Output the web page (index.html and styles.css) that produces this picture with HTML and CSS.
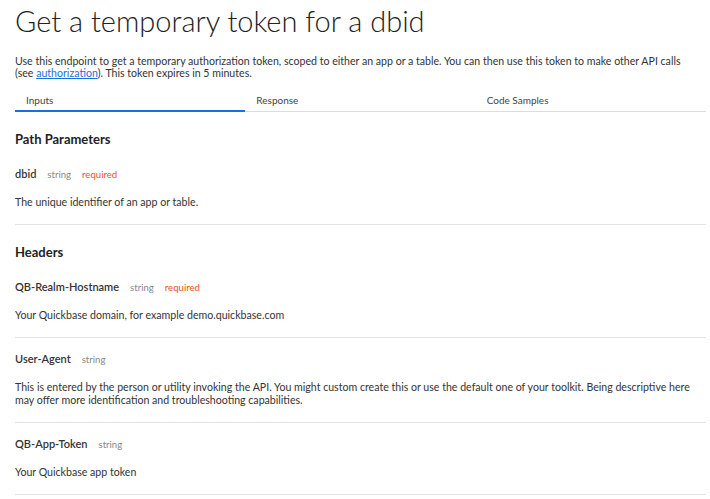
FILE: index.html
```html
<!DOCTYPE html>
<html lang="en">
<head>
  <meta charset="UTF-8">
  <title>Get a temporary token for a dbid</title>
  <link rel="stylesheet" href="styles.css">
</head>
<body>
  <div class="page">
    <h1>Get a temporary token for a dbid</h1>

    <p class="intro">
      Use this endpoint to get a temporary authorization token, scoped to either an app or a table. You can then use this token to make other API calls<br>
      (see <a href="#">authorization</a>). This token expires in 5 minutes.
    </p>

    <!-- Tabs -->
    <div class="tabs">
      <div class="tab active">Inputs</div>
      <div class="tab">Response</div>
      <div class="tab">Code Samples</div>
    </div>

    <!-- Path parameters -->
    <div class="section">
      <h2>Path Parameters</h2>
      <div class="param">
        <div class="param-head">
          <span class="param-name">dbid</span>
          <span class="param-type">string</span>
          <span class="param-req">required</span>
        </div>
        <p class="param-desc">The unique identifier of an app or table.</p>
      </div>
    </div>

    <!-- Headers -->
    <div class="section">
      <h2>Headers</h2>
      <div class="param">
        <div class="param-head">
          <span class="param-name">QB-Realm-Hostname</span>
          <span class="param-type">string</span>
          <span class="param-req">required</span>
        </div>
        <p class="param-desc">Your Quickbase domain, for example demo.quickbase.com</p>
      </div>
      <div class="param">
        <div class="param-head">
          <span class="param-name">User-Agent</span>
          <span class="param-type">string</span>
        </div>
        <p class="param-desc">This is entered by the person or utility invoking the API. You might custom create this or use the default one of your toolkit. Being descriptive here may offer more identification and troubleshooting capabilities.</p>
      </div>
      <div class="param">
        <div class="param-head">
          <span class="param-name">QB-App-Token</span>
          <span class="param-type">string</span>
        </div>
        <p class="param-desc">Your Quickbase app token</p>
      </div>
    </div>
  </div>
</body>
</html>
```

FILE: styles.css
```css
/* Global Styles */
body {
  margin: 0;
  background-color: #fff;
  font-family: Lato, Arial, sans-serif;
  color: #333;
}

.page {
  padding: 0 4px 0 15px;
}

h1 {
  margin: 0;
  padding-top: 4px;
  font-size: 29px;
  font-weight: 300;
  line-height: 34px;
  color: #222;
}

.intro {
  margin: 17px 0 0;
  font-size: 10.6px;
  line-height: 12px;
  color: #333;
}

.intro a {
  color: #1a6fe0;
}

/* Tabs */
.tabs {
  display: grid;
  grid-template-columns: 1fr 1fr 1fr;
  margin-top: 15px;
  border-bottom: 1px solid #dcdcdc;
}

.tab {
  padding: 0 11px 3px;
  font-size: 10px;
  line-height: 13px;
  color: #444;
}

.tab.active {
  border-bottom: 2px solid #1a6fe0;
  margin-bottom: -1px;
}

/* Sections */
.section h2 {
  margin: 0;
  padding: 19px 0 8px;
  font-size: 13px;
  font-weight: 700;
  line-height: 16px;
  color: #222;
}

.param {
  border-bottom: 1px solid #e2e2e2;
  padding: 14px 0 15px;
}

.section h2 + .param {
  padding-top: 12px;
}

.param-head {
  display: flex;
  align-items: baseline;
  gap: 11px;
  font-size: 11px;
  line-height: 14px;
}

.param-name {
  font-weight: 600;
  color: #333;
}

.param-type {
  font-size: 9.6px;
  color: #888;
}

.param-req {
  font-size: 9.6px;
  color: #e4542a;
}

.param-desc {
  margin: 14px 0 0;
  font-size: 10.6px;
  line-height: 13px;
  color: #333;
}
```
